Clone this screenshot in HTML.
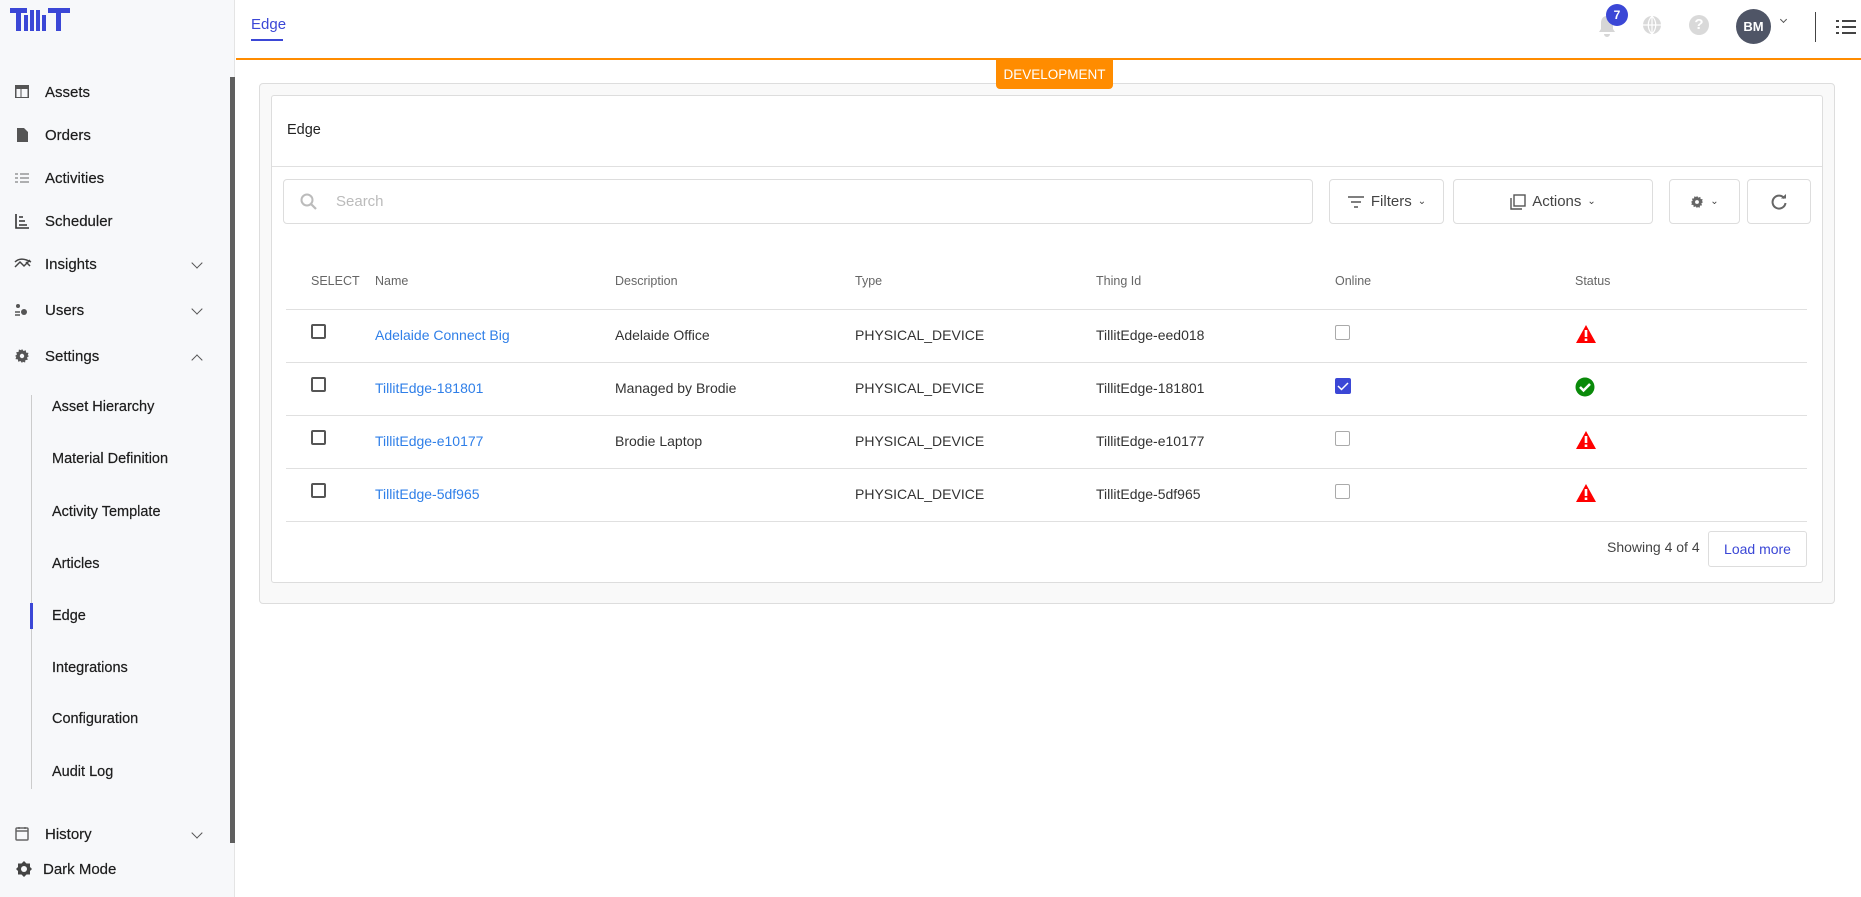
<!DOCTYPE html>
<html><head><meta charset="utf-8"><style>
*{box-sizing:border-box;margin:0;padding:0}
body{width:1861px;height:897px;overflow:hidden;font-family:"Liberation Sans",sans-serif;background:#fff;position:relative;color:#222}
.abs{position:absolute}
#side{left:0;top:0;width:235px;height:897px;background:#f7f8fa;border-right:1px solid #e4e4e4}
.ni{position:absolute;left:0;font-size:15px;color:#1d1d1d;font-weight:500;-webkit-text-stroke:.2px #1d1d1d}
.ni .ic{position:absolute;left:14px;top:0;width:16px;height:16px}
.ni span{position:absolute;left:45px;top:0;white-space:nowrap}
.chev{position:absolute;left:193px;width:8px;height:8px;border-right:1.6px solid #555;border-bottom:1.6px solid #555;transform:rotate(45deg)}
.sub{position:absolute;left:52px;font-size:14.5px;color:#1d1d1d;-webkit-text-stroke:.2px #1d1d1d;white-space:nowrap}
.hdr{font-size:12.5px;color:#666;position:absolute;top:274px}
.cell{position:absolute;font-size:14px;color:#333;white-space:nowrap}
.lnk{color:#2f7fe8}
.cb{position:absolute;width:15px;height:15px;border:2px solid #555;border-radius:2px}
.cb2{position:absolute;width:15px;height:15px;border:1.5px solid #aaa;border-radius:2px}
.hl{position:absolute;left:286px;width:1521px;height:1px;background:#e0e0e0}
.btn{position:absolute;top:179px;height:45px;border:1px solid #ddd;border-radius:4px;background:#fff;font-size:15px;color:#444;display:flex;align-items:center;justify-content:center;gap:6px}
</style></head><body>
<div id="side" class="abs">
 <svg class="abs" style="left:10px;top:8px" width="60" height="23" viewBox="0 0 60 23"><g fill="#3b47d6"><rect x="0" y="0" width="17" height="5"/><rect x="6" y="0" width="5" height="23"/><rect x="14" y="7" width="4" height="16"/><rect x="20" y="2" width="4" height="21"/><rect x="26" y="2" width="4" height="21"/><rect x="32" y="7" width="4" height="16"/><rect x="38" y="0" width="22" height="5"/><rect x="46" y="0" width="5" height="23"/></g></svg>
 <div class="ni" style="top:84px"><svg class="ic" viewBox="0 0 16 16"><rect x="1" y="1" width="14" height="13" fill="#555"/><rect x="2.5" y="5" width="4" height="8" fill="#f7f8fa"/><rect x="7.5" y="5" width="6" height="8" fill="#f7f8fa"/></svg><span>Assets</span></div>
 <div class="ni" style="top:127px"><svg class="ic" viewBox="0 0 16 16"><path d="M3 1h7l4 4v10H3z" fill="#555"/></svg><span>Orders</span></div>
 <div class="ni" style="top:170px"><svg class="ic" viewBox="0 0 16 16"><path d="M6 4h9M6 8h9M6 12h9M1 4h3M1 8h3M1 12h3" stroke="#666" stroke-width="1"/></svg><span>Activities</span></div>
 <div class="ni" style="top:213px"><svg class="ic" viewBox="0 0 16 16"><path d="M2 1v14h13M5 4h4M5 8h6M5 12h8" stroke="#333" stroke-width="1.6" fill="none"/></svg><span>Scheduler</span></div>
 <div class="ni" style="top:256px"><svg class="ic" style="width:18px" viewBox="0 0 18 16"><path d="M1 11l5-5 4 4 6-6M1 6c4-4 9-4 16 0M12 6l4 4" stroke="#444" stroke-width="1.5" fill="none"/></svg><span>Insights</span><div class="chev" style="top:3px"></div></div>
 <div class="ni" style="top:302px"><svg class="ic" viewBox="0 0 16 16"><circle cx="4" cy="4" r="2" fill="#555"/><circle cx="10" cy="10" r="3" fill="#555"/><path d="M1 10h5M1 13h5" stroke="#555" stroke-width="1.5"/></svg><span>Users</span><div class="chev" style="top:3px"></div></div>
 <div class="ni" style="top:348px"><svg class="ic" viewBox="0 0 16 16"><path d="M8 1l1.5 2 2.3-.8.3 2.4 2.4.3-.8 2.3L15 8l-2 1.5.8 2.3-2.4.3-.3 2.4-2.3-.8L8 15l-1.5-2-2.3.8-.3-2.4-2.4-.3.8-2.3L1 8l2-1.5-.8-2.3 2.4-.3.3-2.4 2.3.8z" fill="#555"/><circle cx="8" cy="8" r="2.2" fill="#f7f8fa"/></svg><span>Settings</span><div class="chev" style="top:8px;transform:rotate(225deg)"></div></div>
 <div class="abs" style="left:31px;top:395px;width:1px;height:394px;background:#ccc"></div>
 <div class="sub" style="top:399px">Asset Hierarchy</div>
 <div class="sub" style="top:451px">Material Definition</div>
 <div class="sub" style="top:504px">Activity Template</div>
 <div class="sub" style="top:556px">Articles</div>
 <div class="abs" style="left:30px;top:603px;width:3px;height:26px;background:#3b47d6"></div>
 <div class="sub" style="top:608px">Edge</div>
 <div class="sub" style="top:660px">Integrations</div>
 <div class="sub" style="top:711px">Configuration</div>
 <div class="sub" style="top:764px">Audit Log</div>
 <div class="ni" style="top:826px"><svg class="ic" viewBox="0 0 16 16"><rect x="2" y="2" width="12" height="12" rx="1" fill="none" stroke="#666" stroke-width="1.5"/><path d="M2 5h12M5 1v2M11 1v2" stroke="#666" stroke-width="1.5"/></svg><span>History</span><div class="chev" style="top:3px"></div></div>
 <div class="ni" style="top:861px"><svg class="ic" style="left:16px" viewBox="0 0 16 16"><path d="M8 0l2.5 2.5H14v3.5L16 8l-2 2v3.5h-3.5L8 16l-2.5-2.5H2V10L0 8l2-2V2.5h3.5z" fill="#444"/><circle cx="8" cy="8" r="3" fill="#f7f8fa"/></svg><span style="left:43px">Dark Mode</span></div>
 <div class="abs" style="left:230px;top:77px;width:5px;height:766px;background:#5f5f5f"></div>
</div>
<div class="abs" style="left:251px;top:16px;font-size:15px;color:#3b47d6">Edge</div>
<div class="abs" style="left:251px;top:39px;width:32px;height:2px;background:#3b47d6"></div>
<div class="abs" style="left:236px;top:58px;width:1625px;height:2px;background:#ff8c00"></div>
<svg class="abs" style="left:1596px;top:14px" width="22" height="24" viewBox="0 0 22 24"><path d="M11 2c-4 0-6 3-6 7v6l-2 3h16l-2-3V9c0-4-2-7-6-7zM8 20h6a3 3 0 0 1-6 0z" fill="#d6d6d6"/></svg>
<div class="abs" style="left:1606px;top:4px;width:22px;height:22px;border-radius:50%;background:#3b47d6;color:#fff;font-size:12px;font-weight:bold;text-align:center;line-height:22px">7</div>
<svg class="abs" style="left:1642px;top:15px" width="20" height="20" viewBox="0 0 20 20"><circle cx="10" cy="10" r="9" fill="#d9d9d9"/><path d="M1 10h18M10 1v18M10 1c-5 5-5 13 0 18M10 1c5 5 5 13 0 18" stroke="#fff" stroke-width="1.2" fill="none"/></svg>
<div class="abs" style="left:1689px;top:15px;width:20px;height:20px;border-radius:50%;background:#d9d9d9;color:#fff;font-size:15px;font-weight:bold;text-align:center;line-height:20px">?</div>
<div class="abs" style="left:1736px;top:9px;width:35px;height:35px;border-radius:50%;background:#4f5566;color:#fff;font-size:13px;font-weight:bold;text-align:center;line-height:35px">BM</div>
<div class="abs" style="left:1781px;top:17px;width:5px;height:5px;border-right:1.5px solid #555;border-bottom:1.5px solid #555;transform:rotate(45deg)"></div>
<div class="abs" style="left:1815px;top:12px;width:1px;height:30px;background:#444"></div>
<svg class="abs" style="left:1836px;top:19px" width="20" height="16" viewBox="0 0 20 16"><path d="M0 2h3M6 2h14M0 8h3M6 8h14M0 14h3M6 14h14" stroke="#444" stroke-width="2"/></svg>
<div class="abs" style="left:259px;top:83px;width:1576px;height:521px;border:1px solid #ddd;border-radius:4px;background:#f9f9f9"></div>
<div class="abs" style="left:271px;top:95px;width:1552px;height:488px;border:1px solid #ddd;border-radius:3px;background:#fff"></div>
<div class="abs" style="left:996px;top:60px;width:117px;height:29px;background:#ff8c00;border-radius:0 0 4px 4px;color:#fff;font-size:13.5px;text-align:center;line-height:29px">DEVELOPMENT</div>
<div class="abs" style="left:287px;top:122px;font-size:14.5px;color:#222">Edge</div>
<div class="abs" style="left:272px;top:166px;width:1550px;height:1px;background:#e0e0e0"></div>
<div class="abs" style="left:283px;top:179px;width:1030px;height:45px;border:1px solid #ddd;border-radius:4px"></div>
<svg class="abs" style="left:300px;top:193px" width="18" height="18" viewBox="0 0 18 18"><circle cx="7" cy="7" r="5.5" fill="none" stroke="#bbb" stroke-width="2"/><path d="M11 11l5 5" stroke="#bbb" stroke-width="2.2"/></svg>
<div class="abs" style="left:336px;top:193px;font-size:15px;color:#bbb">Search</div>
<div class="btn" style="left:1329px;width:115px"><svg width="18" height="14" viewBox="0 0 18 14"><path d="M1 2h16M4 7h10M7 12h4" stroke="#555" stroke-width="1.6"/></svg>Filters <span style="font-size:10px">&#8964;</span></div>
<div class="btn" style="left:1453px;width:200px"><svg width="16" height="16" viewBox="0 0 16 16"><rect x="4" y="1" width="11" height="11" fill="none" stroke="#555" stroke-width="1.4"/><path d="M1 4v11h11" fill="none" stroke="#555" stroke-width="1.4"/></svg>Actions <span style="font-size:10px">&#8964;</span></div>
<div class="btn" style="left:1669px;width:71px"><svg width="14" height="14" viewBox="0 0 16 16"><path d="M8 1l1.5 2 2.3-.8.3 2.4 2.4.3-.8 2.3L15 8l-2 1.5.8 2.3-2.4.3-.3 2.4-2.3-.8L8 15l-1.5-2-2.3.8-.3-2.4-2.4-.3.8-2.3L1 8l2-1.5-.8-2.3 2.4-.3.3-2.4 2.3.8z" fill="#666"/><circle cx="8" cy="8" r="2.2" fill="#fff"/></svg><span style="font-size:10px">&#8964;</span></div>
<div class="btn" style="left:1747px;width:64px"><svg width="18" height="18" viewBox="0 0 18 18"><path d="M14.5 5.5A6.5 6.5 0 1 0 15.5 10" fill="none" stroke="#666" stroke-width="2"/><path d="M11 5.5h5V1z" fill="#666"/></svg></div>
<div class="hdr" style="left:311px">SELECT</div>
<div class="hdr" style="left:375px">Name</div>
<div class="hdr" style="left:615px">Description</div>
<div class="hdr" style="left:855px">Type</div>
<div class="hdr" style="left:1096px">Thing Id</div>
<div class="hdr" style="left:1335px">Online</div>
<div class="hdr" style="left:1575px">Status</div>
<div class="hl" style="top:309px"></div><div class="hl" style="top:362px"></div><div class="hl" style="top:415px"></div><div class="hl" style="top:468px"></div><div class="hl" style="top:521px"></div>
<div class="cb" style="left:311px;top:324px"></div>
<div class="cell lnk" style="left:375px;top:327px">Adelaide Connect Big</div>
<div class="cell" style="left:615px;top:327px">Adelaide Office</div>
<div class="cell" style="left:855px;top:327px">PHYSICAL_DEVICE</div>
<div class="cell" style="left:1096px;top:327px">TillitEdge-eed018</div>
<div class="cb2" style="left:1335px;top:325px"></div>
<div class="cb" style="left:311px;top:377px"></div>
<div class="cell lnk" style="left:375px;top:380px">TillitEdge-181801</div>
<div class="cell" style="left:615px;top:380px">Managed by Brodie</div>
<div class="cell" style="left:855px;top:380px">PHYSICAL_DEVICE</div>
<div class="cell" style="left:1096px;top:380px">TillitEdge-181801</div>
<div class="abs" style="left:1335px;top:378px;width:16px;height:16px;background:#3b47d6;border-radius:2px"><svg width="16" height="16" viewBox="0 0 16 16"><path d="M3 8l3.5 3.5L13 5" stroke="#fff" stroke-width="1.5" fill="none"/></svg></div>
<div class="cb" style="left:311px;top:430px"></div>
<div class="cell lnk" style="left:375px;top:433px">TillitEdge-e10177</div>
<div class="cell" style="left:615px;top:433px">Brodie Laptop</div>
<div class="cell" style="left:855px;top:433px">PHYSICAL_DEVICE</div>
<div class="cell" style="left:1096px;top:433px">TillitEdge-e10177</div>
<div class="cb2" style="left:1335px;top:431px"></div>
<div class="cb" style="left:311px;top:483px"></div>
<div class="cell lnk" style="left:375px;top:486px">TillitEdge-5df965</div>
<div class="cell" style="left:855px;top:486px">PHYSICAL_DEVICE</div>
<div class="cell" style="left:1096px;top:486px">TillitEdge-5df965</div>
<div class="cb2" style="left:1335px;top:484px"></div>
<svg class="abs" style="left:1575px;top:324px" width="22" height="20" viewBox="0 0 22 20"><path d="M11 1L21 19H1z" fill="#f00"/><rect x="9.7" y="6" width="2.6" height="7" fill="#fff"/><rect x="9.7" y="14.5" width="2.6" height="2.5" fill="#fff"/></svg>
<svg class="abs" style="left:1575px;top:377px" width="20" height="20" viewBox="0 0 20 20"><circle cx="10" cy="10" r="9.5" fill="#0a8a0a"/><path d="M5 10l3.5 3.5L15 7" stroke="#fff" stroke-width="2.5" fill="none"/></svg>
<svg class="abs" style="left:1575px;top:430px" width="22" height="20" viewBox="0 0 22 20"><path d="M11 1L21 19H1z" fill="#f00"/><rect x="9.7" y="6" width="2.6" height="7" fill="#fff"/><rect x="9.7" y="14.5" width="2.6" height="2.5" fill="#fff"/></svg>
<svg class="abs" style="left:1575px;top:483px" width="22" height="20" viewBox="0 0 22 20"><path d="M11 1L21 19H1z" fill="#f00"/><rect x="9.7" y="6" width="2.6" height="7" fill="#fff"/><rect x="9.7" y="14.5" width="2.6" height="2.5" fill="#fff"/></svg>
<div class="abs" style="left:1607px;top:539px;font-size:14px;color:#444">Showing 4 of 4</div>
<div class="abs" style="left:1708px;top:531px;width:99px;height:36px;border:1px solid #ddd;border-radius:3px;color:#3b47d6;font-size:14px;text-align:center;line-height:34px">Load more</div>
</body></html>
